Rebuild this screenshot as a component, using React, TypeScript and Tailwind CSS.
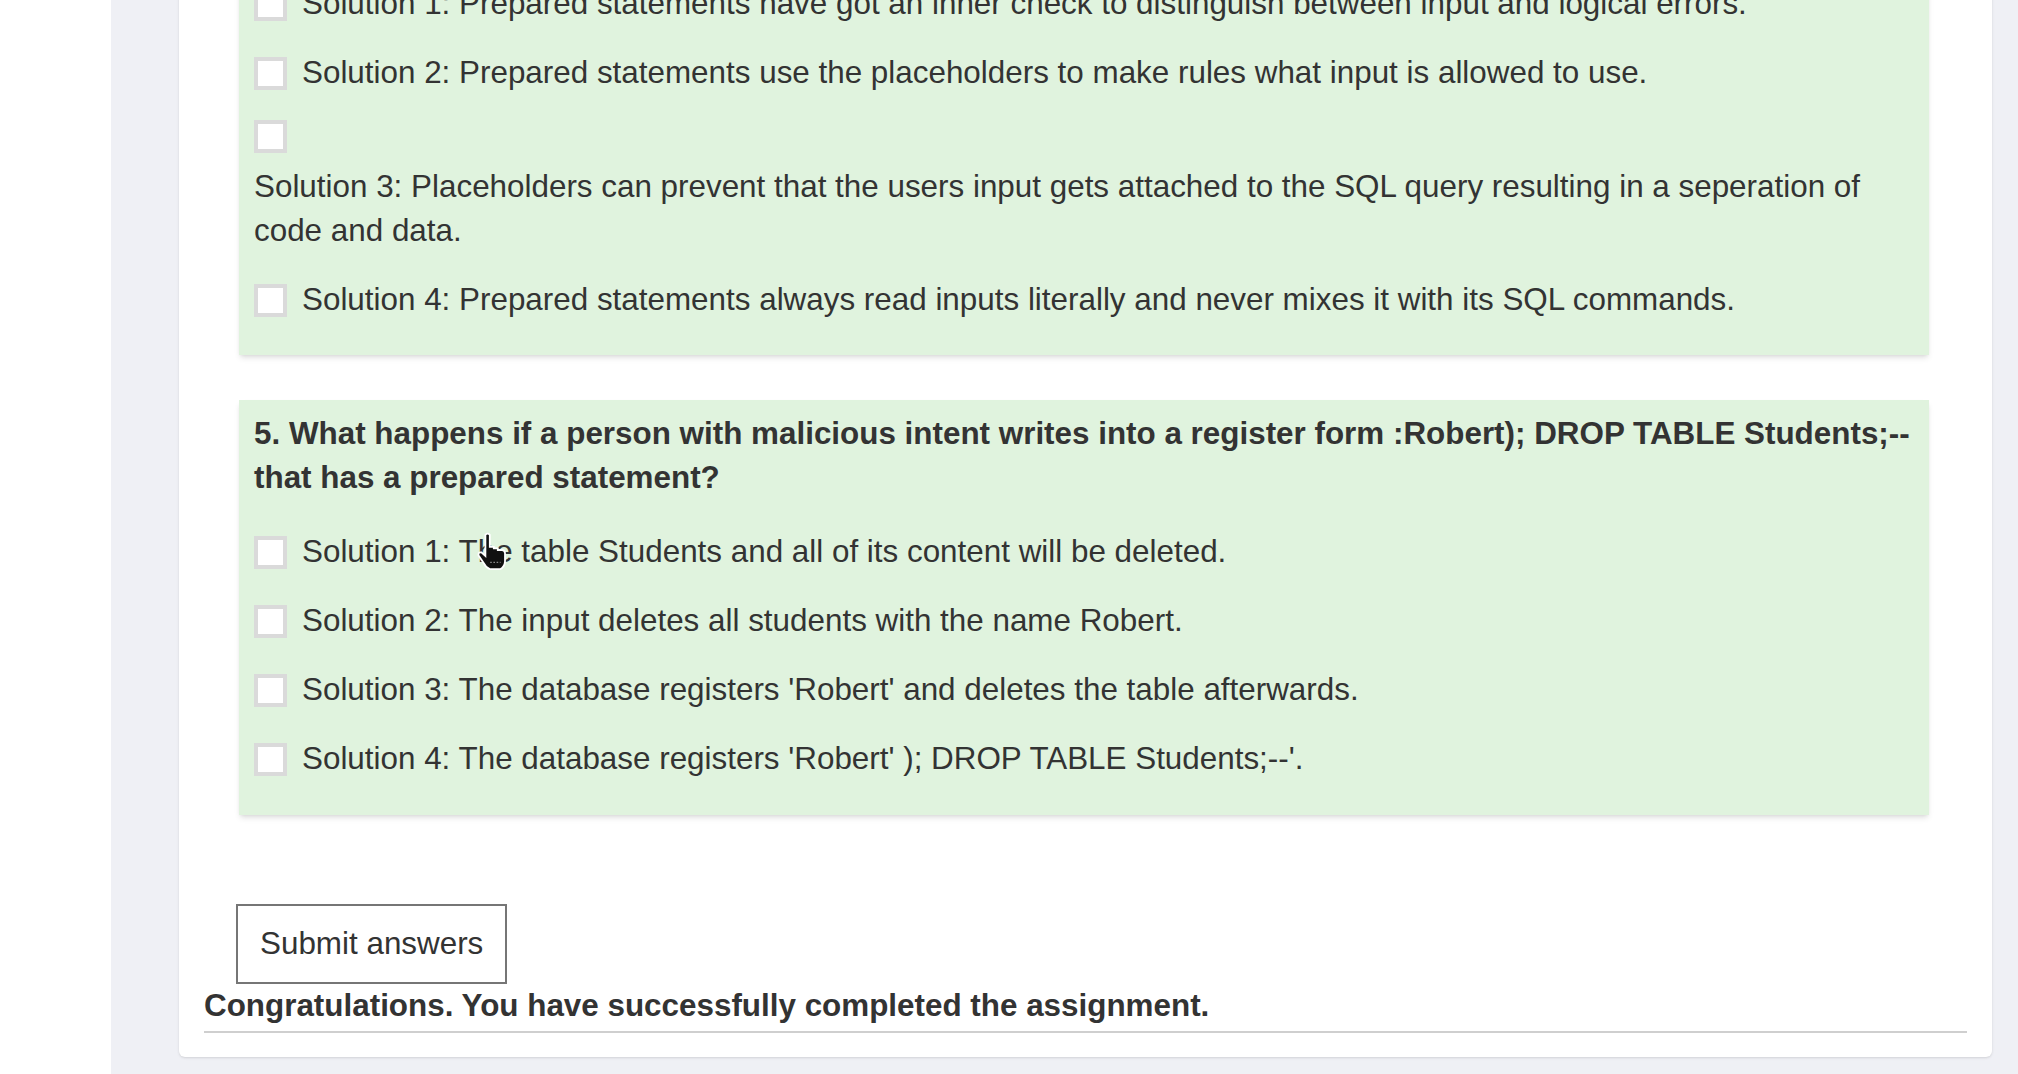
import React from 'react';

interface Option {
  id: string;
  text: string;
}

const q4Options: Option[] = [
  { id: 'q4-1', text: 'Solution 1: Prepared statements have got an inner check to distinguish between input and logical errors.' },
  { id: 'q4-2', text: 'Solution 2: Prepared statements use the placeholders to make rules what input is allowed to use.' },
  { id: 'q4-3', text: 'Solution 3: Placeholders can prevent that the users input gets attached to the SQL query resulting in a seperation of code and data.' },
  { id: 'q4-4', text: 'Solution 4: Prepared statements always read inputs literally and never mixes it with its SQL commands.' },
];

const q5Options: Option[] = [
  { id: 'q5-1', text: 'Solution 1: The table Students and all of its content will be deleted.' },
  { id: 'q5-2', text: 'Solution 2: The input deletes all students with the name Robert.' },
  { id: 'q5-3', text: "Solution 3: The database registers 'Robert' and deletes the table afterwards." },
  { id: 'q5-4', text: "Solution 4: The database registers 'Robert' ); DROP TABLE Students;--'." },
];

const HandCursor = () => (
  <svg width="36" height="40" viewBox="0 0 18 20" className="absolute left-[221px] top-[2px] pointer-events-none">
    <path
      d="M5.2 1.4 Q6.3 0.2 7.4 1.4 L7.4 7.4 L9.4 7.4 L9.4 8.2 L11.4 8.2 L11.4 9 L13.6 9 Q15 9.2 15 10.6 L15 14.8 Q14.8 17.4 12.6 18.6 L7.4 18.6 Q5.4 17.8 4.4 15.6 L1.8 11.8 Q1.4 10 3.2 10.2 L5.2 12 Z"
      fill="#111"
      stroke="#fff"
      strokeWidth="0.9"
    />
    <path d="M7.6 15.2 L12.8 15.2" stroke="#888" strokeWidth="0.7" strokeDasharray="0.8 0.8" />
  </svg>
);

const OptionRow = ({ option, first, cursor }: { option: Option; first?: boolean; cursor?: boolean }) => (
  <div className={`relative flex flex-wrap items-center gap-x-[15px] gap-y-[12px] ${first ? '' : 'mt-[25px]'}`}>
    <input
      type="checkbox"
      className="appearance-none w-[33px] h-[33px] bg-white border-[4px] border-[#dadada] shrink-0"
    />
    <label className="leading-[44px]">{option.text}</label>
    {cursor && <HandCursor />}
  </div>
);

export default function App() {
  return (
    <div className="h-[1074px] overflow-hidden flex bg-white text-[#333] text-[31.4px] leading-[44px] font-['Liberation_Sans',Arial,sans-serif]">
      <div className="w-[111px] shrink-0 bg-white" />
      <div className="flex-1 bg-[#eff0f5] pl-[68px] pr-[26px]">
        {/* page is scrolled: panel top sits above the viewport */}
        <div className="-mt-[18px] bg-white rounded-b-md shadow-sm px-[25px] pb-[24px]">
          <div className="pl-[35px] pr-[38px]">
            {/* Question 4 (top cut off) */}
            <div className="bg-[#e0f3de] shadow-md pl-[15px] pr-[10px] pb-[33px]">
              {q4Options.map((o, i) => (
                <OptionRow key={o.id} option={o} first={i === 0} />
              ))}
            </div>

            {/* Question 5 */}
            <div className="mt-[45px] bg-[#e0f3de] shadow-md pl-[15px] pr-[10px] pt-[12px] pb-[34px]">
              <p className="font-bold mb-[30px]">
                5. What happens if a person with malicious intent writes into a register form :Robert); DROP TABLE Students;-- that has a prepared statement?
              </p>
              {q5Options.map((o, i) => (
                <OptionRow key={o.id} option={o} first={i === 0} cursor={i === 0} />
              ))}
            </div>

            <div className="mt-[89px] -ml-[3px]">
              <button className="border-2 border-[#767676] bg-white px-[22px] py-[16px] leading-[44px] text-[#333]">
                Submit answers
              </button>
            </div>
          </div>
          <p className="font-bold">Congratulations. You have successfully completed the assignment.</p>
          <hr className="mt-[3px] border-t-2 border-[#cfcfcf]" />
        </div>
      </div>
    </div>
  );
}
